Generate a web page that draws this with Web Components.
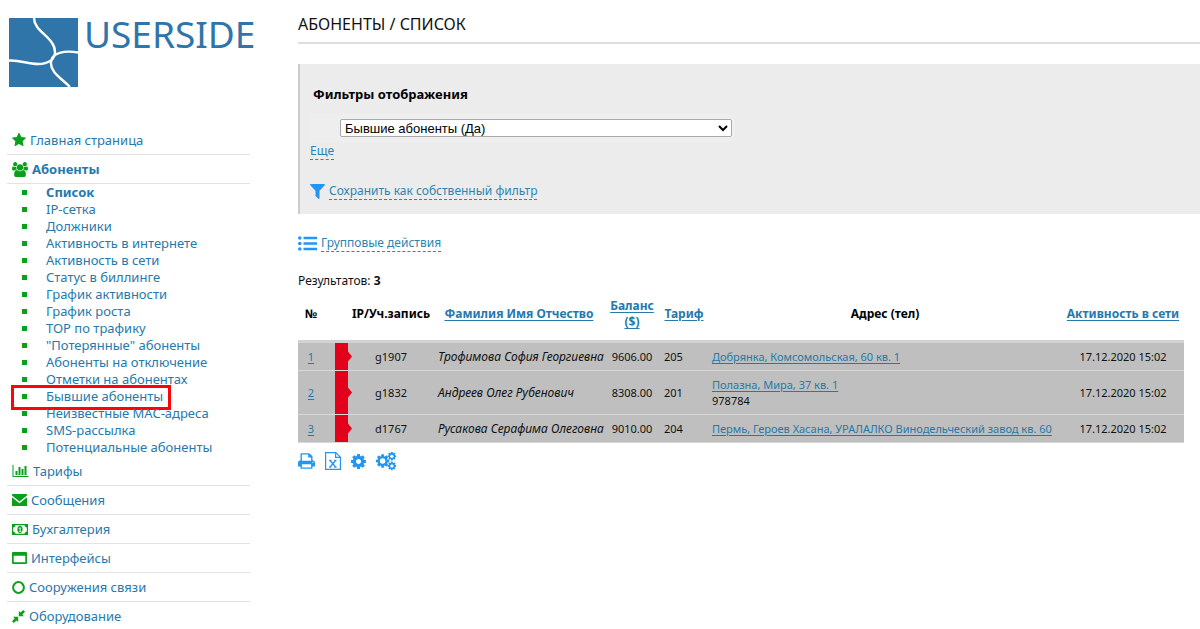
<!DOCTYPE html>
<html lang="ru">
<head>
<meta charset="utf-8">
<meta name="viewport" content="width=device-width, initial-scale=1">
<title>USERSIDE - Абоненты / Список</title>
<style>
  body { margin: 0; background: #fff; color: #111; font: 13px/17px "Noto Sans", "Open Sans", sans-serif; }
</style>
</head>
<body>
<us-app></us-app>

<template id="tpl-app">
  <style>
    :host { display: grid; grid-template-columns: 250px minmax(0, 1fr); column-gap: 48px; height: 100vh; overflow: hidden; }
    aside { padding: 18px 0 0 7px; }
    main { padding-top: 14px; }
    h1 { margin: 0; padding-bottom: 7px; border-bottom: 2px solid #dedede; font-size: 16px; line-height: 21px; font-weight: 400; text-transform: uppercase; }
    us-filter-panel { margin-top: 20px; }
    .group { margin-top: 20px; }
    .results { margin: 20px 0 3px; font-size: 12px; }
  </style>
  <aside>
    <us-logo></us-logo>
    <us-menu></us-menu>
  </aside>
  <main>
    <h1>Абоненты / Список</h1>
    <us-filter-panel></us-filter-panel>
    <us-action class="group" icon="list">Групповые действия</us-action>
    <p class="results">Результатов: <b>3</b></p>
    <us-subscribers></us-subscribers>
    <us-toolbar></us-toolbar>
  </main>
</template>

<template id="tpl-logo">
  <style>
    :host { display: flex; gap: 6px; height: 108px; padding-left: 2px; color: #3075a9; font-size: 37px; line-height: 32px; }
    svg { flex: none; width: 69px; height: 69px; }
  </style>
  <svg viewBox="0 0 69 69" aria-hidden="true">
    <path fill="#3075a9" d="M0 0h69v69H0z"/>
    <path fill="none" stroke="#fff" stroke-width="2.4" d="M25 0C25 14 46 19 46 34C46 41 40 46 29 46C18 46 12 42 0 42.500M69 34.500C55 32 43 35 42 44C41 54 52 60 61 69"/>
  </svg>
  <span>USERSIDE</span>
</template>

<template id="tpl-icon">
  <style>
    :host { display: inline-flex; flex: none; }
    svg { display: block; fill: currentColor; overflow: visible; }
  </style>
</template>

<template id="tpl-menu">
  <style>
    :host { display: block; }
    nav { display: flex; flex-direction: column; }
    ul { margin: 0 0 1px; padding: 0; list-style: none; }
    li { display: flex; align-items: center; height: 17px; padding-left: 15px; gap: 19px; position: relative; }
    li::before { content: ""; width: 5px; height: 5px; background: #0ba01c; }
    a { color: #2579ac; text-decoration: none; }
    .current a { font-weight: 700; }
    .marked::after { content: ""; position: absolute; left: 4px; top: -3px; width: 154px; height: 19px; border: 3px solid #fb0509; }
  </style>
  <nav>
    <us-menu-row icon="star" href="#home">Главная страница</us-menu-row>
    <us-menu-row icon="users" href="#subscribers" current>Абоненты</us-menu-row>
    <ul></ul>
    <us-menu-row icon="chart" href="#tariffs">Тарифы</us-menu-row>
    <us-menu-row icon="mail" href="#messages">Сообщения</us-menu-row>
    <us-menu-row icon="money" href="#accounting">Бухгалтерия</us-menu-row>
    <us-menu-row icon="window" href="#interfaces">Интерфейсы</us-menu-row>
    <us-menu-row icon="circle" href="#facilities">Сооружения связи</us-menu-row>
    <us-menu-row icon="compress" href="#equipment">Оборудование</us-menu-row>
  </nav>
</template>

<template id="tpl-menu-row">
  <style>
    :host { display: block; height: 28px; border-bottom: 1px solid #e2e2e2; }
    a { display: flex; align-items: center; gap: 4px; height: 28px; padding-left: 5px; color: #2579ac; text-decoration: none; }
    :host([current]) a { font-weight: 700; }
    us-icon { color: #0ba01c; }
  </style>
  <a><us-icon></us-icon><slot></slot></a>
</template>

<template id="tpl-action">
  <style>
    :host { display: flex; align-items: center; gap: 4px; font-size: 12px; }
    us-icon { color: #2196f3; }
    button { padding: 0; border: 0; border-bottom: 1px dashed #2d84b2; background: none; color: #2d84b2; font: inherit; line-height: 17px; cursor: pointer; }
  </style>
  <button type="button"><slot></slot></button>
</template>

<template id="tpl-filter">
  <style>
    :host { display: block; padding: 20px 10px 14px; border-left: 2px solid #ccc; background: #ececec; }
    h2 { margin: 0 3px 10px; font-size: 13px; line-height: 20px; font-weight: 700; color: #000; }
    .field { display: flex; width: 425px; max-width: 100%; box-sizing: border-box; padding: 5px 3px 5px 30px; background: #eee; }
    select { flex: 1; min-width: 0; height: 18px; padding: 0; border: 1px solid #aaa; border-radius: 2px; background: #fff; color: #000; font: 13px/16px "Liberation Sans", Arial, sans-serif; }
    .save { margin-top: 22px; }
  </style>
  <h2>Фильтры отображения</h2>
  <div class="field">
    <select aria-label="Фильтр"><option>Бывшие абоненты (Да)</option></select>
  </div>
  <us-action>Еще</us-action>
  <us-action class="save" icon="filter">Сохранить как собственный фильтр</us-action>
</template>

<template id="tpl-subscribers">
  <style>
    :host { display: block; padding-right: 16px; font-size: 11px; line-height: 16px; }
    table { width: 100%; border-collapse: separate; border-spacing: 0; table-layout: fixed; }
    th, td { padding: 0 4px; text-align: left; }
    th { height: 44px; padding-bottom: 4px; font-size: 12px; text-align: center; color: #000; border-bottom: 3px solid #d2d2d2; white-space: nowrap; }
    td { padding: 6px 4px 5px; background: #bfbfbf; border-bottom: 1px solid #d8d8d8; }
    th.wrap { white-space: normal; }
    .no { width: 18px; text-align: center; }
    .mark { width: 24px; padding: 0; }
    .ip { width: 78px; text-align: center; }
    .name { width: 162px; }
    .balance { width: 48px; text-align: center; }
    .tariff { width: 40px; }
    .seen { width: 114px; text-align: center; }
    td.name { font-size: 12px; font-style: italic; white-space: nowrap; }
    a { color: #2579ac; text-decoration: underline; text-underline-offset: 2px; }
    td.mark { position: relative; }
    td.mark::before { content: ""; position: absolute; inset: 0 -4px 0 11px; background: #e2001a; clip-path: polygon(0 0, 13px 0, 13px calc(50% - 5px), 17px 50%, 13px calc(50% + 5px), 13px 100%, 0 100%); }
    thead .ip { padding-left: 0; padding-right: 0; width: 86px; }
  </style>
  <table>
    <thead><tr>
      <th class="no" scope="col">№</th><th class="mark"></th>
      <th class="ip" scope="col">IP/Уч.запись</th>
      <th class="name" scope="col"><a href="#name">Фамилия Имя Отчество</a></th>
      <th class="balance wrap" scope="col"><a href="#balance">Баланс ($)</a></th>
      <th class="tariff" scope="col"><a href="#tariff">Тариф</a></th>
      <th scope="col">Адрес (тел)</th>
      <th class="seen" scope="col"><a href="#seen">Активность в сети</a></th>
    </tr></thead>
    <tbody></tbody>
  </table>
</template>

<template id="tpl-toolbar">
  <style>
    :host { display: flex; align-items: center; gap: 10px; padding-top: 9px; color: #2196f3; }
    button { display: flex; padding: 0; border: 0; background: none; color: inherit; cursor: pointer; }
  </style>
  <button type="button" aria-label="Печать"><us-icon name="print"></us-icon></button>
  <button type="button" aria-label="Экспорт в Excel"><us-icon name="excel"></us-icon></button>
  <button type="button" aria-label="Настройки"><us-icon name="gear"></us-icon></button>
  <button type="button" aria-label="Дополнительные настройки"><us-icon name="gears"></us-icon></button>
</template>

<script>
const GEAR = 'M1152 896q0-106-75-181t-181-75-181 75-75 181 75 181 181 75 181-75 75-181zm512-109v222q0 12-8 23t-20 13l-185 28q-19 54-39 91 35 50 107 138 10 12 10 25t-9 23q-27 37-99 108t-94 71q-12 0-26-9l-138-108q-44 23-91 38-16 136-29 186-7 28-36 28h-222q-14 0-24.500-8.500t-11.500-21.500l-28-184q-49-16-90-37l-141 107q-10 9-25 9-14 0-25-11-126-114-165-168-7-10-7-23 0-12 8-23 15-21 51-66.500t54-70.500q-27-50-41-99l-183-27q-13-2-21-12.500t-8-23.500v-222q0-12 8-23t19-13l186-28q14-46 39-92-40-57-107-138-10-12-10-24 0-10 9-23 26-36 98.500-107.500t94.500-71.500q13 0 26 10l138 107q44-23 91-38 16-136 29-186 7-28 36-28h222q14 0 24.500 8.500t11.500 21.500l28 184q49 16 90 37l142-107q9-9 24-9 13 0 25 10 129 119 165 170 7 8 7 22 0 12-8 23-15 21-51 66.500t-54 70.500q26 50 41 98l183 28q13 2 21 12.500t8 23.500z';
// name: [viewBox width, viewBox height, drawn width in px, drawn height in px, markup]
const ICONS = {
  star: [1664, 1792, 14, 15, '<path transform="translate(-64 -60)" d="M1728 647q0 22-26 48l-363 354 86 500q1 7 1 20 0 21-10.500 35.500t-30.500 14.500q-19 0-40-12l-449-236-449 236q-22 12-40 12-21 0-31.500-14.500t-10.500-35.500q0-6 2-20l86-500-364-354q-25-27-25-48 0-37 56-46l502-73 225-455q19-41 49-41t49 41l225 455 502 73q56 9 56 46z"/>'],
  users: [1920, 1792, 16, 15, '<path d="M593 896q-162 5-265 128h-134q-82 0-138-40.500t-56-118.500q0-353 124-353 6 0 43.500 21t97.500 42.500 119 21.500q67 0 133-23-5 37-5 66 0 139 81 256zm1071 637q0 120-73 189.500t-194 69.500h-874q-121 0-194-69.500t-73-189.500q0-53 3.500-103.500t14-109 26.500-108.500 43-97.500 62-81 85.500-53.500 111.500-20q10 0 43 21.500t73 48 107 48 135 21.500 135-21.500 107-48 73-48 43-21.500q61 0 111.500 20t85.500 53.500 62 81 43 97.500 26.500 108.500 14 109 3.500 103.500zm-1024-1277q0 106-75 181t-181 75-181-75-75-181 75-181 181-75 181 75 75 181zm704 384q0 159-112.500 271.500t-271.500 112.500-271.500-112.500-112.500-271.500 112.500-271.500 271.500-112.500 271.500 112.500 112.500 271.500zm576 225q0 78-56 118.500t-138 40.500h-134q-103-123-265-128 81-117 81-256 0-29-5-66 66 23 133 23 59 0 119-21.500t97.500-42.500 43.500-21q124 0 124 353zm-128-609q0 106-75 181t-181 75-181-75-75-181 75-181 181-75 181 75 75 181z"/>'],
  chart: [2048, 1792, 17, 14, '<path d="M640 896v512h-256v-512h256zm384-512v1024h-256v-1024h256zm1024 1152v128h-2048v-1536h128v1408h1920zm-640-896v768h-256v-768h256zm384-384v1152h-256v-1152h256z"/>'],
  mail: [15, 12, 15, 12, '<path d="M.5 0h14q.5 0 .5.500v1L7.500 7.500 0 1.500v-1Q0 0 .5 0zM0 3.200 7.500 9.200 15 3.200v8.300q0 .5-.5.500H.5Q0 12 0 11.500z"/>'],
  money: [16, 11, 16, 11, '<path fill-rule="evenodd" d="M0 0h16v11H0zM3.500 1.300Q3.300 3.300 1.200 3.600v3.800Q3.300 7.700 3.500 9.700h9q.2-2 2.300-2.300V3.600q-2.100-.3-2.300-2.300z"/><path fill-rule="evenodd" d="M8 1.800C11.500 1.800 11.500 9.200 8 9.200S4.500 1.800 8 1.800zM6.700 4.300l.4.700.6-.3V7h-.9v.8h2.700V7h-.9V3.400h-.8z"/>'],
  window: [15, 12, 15, 12, '<path fill-rule="evenodd" d="M1 0h13q1 0 1 1v10q0 1-1 1H1q-1 0-1-1V1Q0 0 1 0zM1.700 3.700v6.600h11.600V3.700z"/>'],
  circle: [13, 13, 13, 13, '<circle cx="6.500" cy="6.500" r="5.400" fill="none" stroke="currentColor" stroke-width="2"/>'],
  compress: [13, 13, 13, 13, '<path d="M6.800 6.200V1l1.700 1.600L11.200 0 13 1.800l-2.600 2.700L12 6.200zM6.200 6.800V12l-1.700-1.600L1.800 13 0 11.200l2.600-2.700L1 6.800z"/>'],
  filter: [15, 15, 15, 15, '<path d="M.6 0h13.800q.9.400.3 1.200L9.500 6.700v7.700q-.3.800-1 .4L5.700 12.200Q5.500 12 5.500 11.500V6.700L.3 1.200Q-.3.400.6 0z"/>'],
  list: [19, 15, 19, 15, '<path d="M5.500.8H19v2.500H5.500zM5.500 6.300H19v2.500H5.500zM5.500 11.800H19v2.500H5.500z"/><circle cx="1.800" cy="2" r="1.800"/><circle cx="1.800" cy="7.500" r="1.800"/><circle cx="1.800" cy="13" r="1.800"/>'],
  print: [17, 16, 17, 16, '<path fill-rule="evenodd" d="M2.500 7.200V1q0-.8.8-.8h8L14.500 3.300v3.900q2.500.2 2.500 2.600v3.300q0 .5-.5.500h-2v1.300q0 .8-.8.800H3.300q-.8 0-.8-.8v-1.300h-2q-.5 0-.5-.5V9.800q0-2.400 2.500-2.600zM3.900 1.500v6.300h9.200V4.500h-2.900v-3zM3.900 11.200v3.200h9.200v-3.200z"/><circle cx="14.900" cy="9.300" r=".6" fill="#fff"/>'],
  excel: [16, 18, 16, 18, '<path fill="none" stroke="currentColor" stroke-width="1.200" d="M.6.600h10.200l4.600 4.600v12.200H.6zM10.600.600v4.800h4.800"/><path fill="none" stroke="currentColor" stroke-width="1.300" d="M5.200 8.500l5.300 6.500M10.500 8.500L5.200 15M4.200 8.500h2.300M9.200 8.500h2.300M4.200 15h2.300M9.200 15h2.300"/>'],
  gear: [1536, 1536, 15, 15, `<path transform="translate(-128 -128)" d="${GEAR}"/>`],
  gears: [20, 18, 20, 18, `<path transform="translate(-1.200 1.200) scale(.0087)" d="${GEAR}"/><circle cx="6.600" cy="9" r="2.700" fill="#fff"/><path transform="translate(10.900 -.8) scale(.0056)" d="${GEAR}"/><circle cx="15.920" cy="4.220" r="1.500" fill="#fff"/><path transform="translate(10.900 8.900) scale(.0056)" d="${GEAR}"/><circle cx="15.920" cy="13.920" r="1.500" fill="#fff"/>`]
};

class UsElement extends HTMLElement {
  constructor() {
    super();
    this.attachShadow({ mode: 'open' })
      .append(document.getElementById(this.constructor.template).content.cloneNode(true));
  }
}

customElements.define('us-icon', class extends UsElement {
  static template = 'tpl-icon';
  static observedAttributes = ['name'];
  attributeChangedCallback() {
    const [vw, vh, w, h, markup] = ICONS[this.getAttribute('name')];
    this.shadowRoot.querySelector('svg')?.remove();
    this.shadowRoot.append(document.createRange().createContextualFragment(
      `<svg viewBox="0 0 ${vw} ${vh}" style="width:${w}px;height:${h}px" aria-hidden="true">${markup}</svg>`));
  }
});

customElements.define('us-logo', class extends UsElement { static template = 'tpl-logo'; });

customElements.define('us-menu-row', class extends UsElement {
  static template = 'tpl-menu-row';
  connectedCallback() {
    this.shadowRoot.querySelector('a').href = this.getAttribute('href');
    this.shadowRoot.querySelector('us-icon').setAttribute('name', this.getAttribute('icon'));
  }
});

customElements.define('us-menu', class extends UsElement {
  static template = 'tpl-menu';
  connectedCallback() {
    const items = ['Список', 'IP-сетка', 'Должники', 'Активность в интернете', 'Активность в сети',
      'Статус в биллинге', 'График активности', 'График роста', 'TOP по трафику', '"Потерянные" абоненты',
      'Абоненты на отключение', 'Отметки на абонентах', 'Бывшие абоненты', 'Неизвестные MAC-адреса',
      'SMS-рассылка', 'Потенциальные абоненты'];
    this.shadowRoot.querySelector('ul').innerHTML = items.map((text, i) =>
      `<li class="${i === 0 ? 'current' : i === 12 ? 'marked' : ''}"><a href="#list-${i}">${text}</a></li>`).join('');
  }
});

customElements.define('us-action', class extends UsElement {
  static template = 'tpl-action';
  connectedCallback() {
    const name = this.getAttribute('icon');
    if (!name) return;
    const icon = document.createElement('us-icon');
    icon.setAttribute('name', name);
    this.shadowRoot.querySelector('button').before(icon);
  }
});

customElements.define('us-filter-panel', class extends UsElement { static template = 'tpl-filter'; });

customElements.define('us-subscribers', class extends UsElement {
  static template = 'tpl-subscribers';
  connectedCallback() {
    const rows = [
      ['g1907', 'Трофимова София Георгиевна', '9606.00', '205', 'Добрянка, Комсомольская, 60 кв. 1', ''],
      ['g1832', 'Андреев Олег Рубенович', '8308.00', '201', 'Полазна, Мира, 37 кв. 1', '978784'],
      ['d1767', 'Русакова Серафима Олеговна', '9010.00', '204', 'Пермь, Героев Хасана, УРАЛАЛКО Винодельческий завод кв. 60', '']
    ];
    this.shadowRoot.querySelector('tbody').innerHTML = rows.map(([ip, name, balance, tariff, address, phone], i) => `
      <tr><td class="no"><a href="#user-${i + 1}">${i + 1}</a></td><td class="mark"></td>
      <td class="ip">${ip}</td><td class="name">${name}</td><td class="balance">${balance}</td>
      <td class="tariff">${tariff}</td>
      <td><a href="#address-${i + 1}">${address}</a>${phone ? `<div>${phone}</div>` : ''}</td>
      <td class="seen">17.12.2020 15:02</td></tr>`).join('');
  }
});

customElements.define('us-toolbar', class extends UsElement { static template = 'tpl-toolbar'; });
customElements.define('us-app', class extends UsElement { static template = 'tpl-app'; });
</script>
</body>
</html>
